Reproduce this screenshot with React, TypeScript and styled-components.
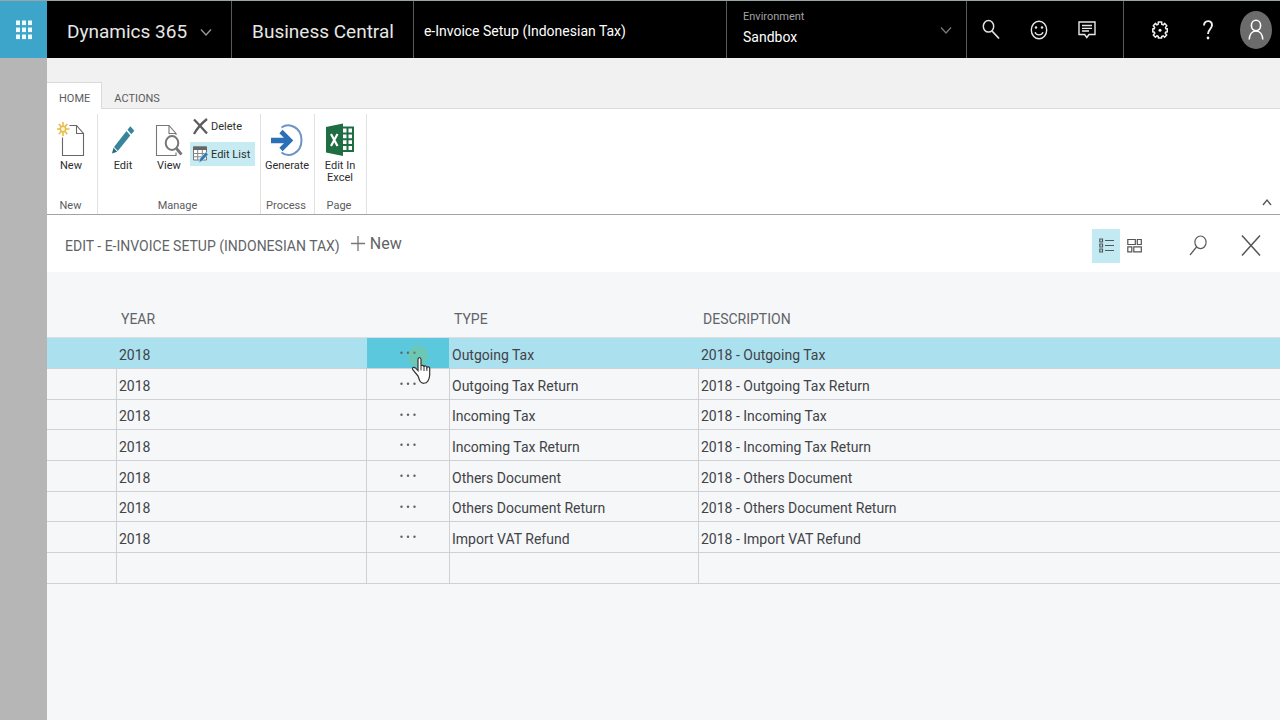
import React from "react";
import styled, { createGlobalStyle } from "styled-components";

const GlobalStyle = createGlobalStyle`
  *, *::before, *::after { box-sizing: border-box; }
  body { margin: 0; background: #f6f7f9; }
  body, button, select, input, table {
    font-family: Roboto, "Segoe UI", sans-serif;
  }
  button { margin: 0; padding: 0; border: 0; background: none; color: inherit; cursor: pointer; }
  svg { display: block; flex: none; }
`;

const Shell = styled.div`
  display: flex;
  flex-direction: column;
  min-height: 100vh;
`;

const TopBar = styled.header`
  display: flex;
  height: 58px;
  background: #000;
  color: #fff;
  border-top: 1px solid #9aa5a8;
`;

const Launcher = styled.button`
  display: grid;
  place-items: center;
  width: 47px;
  background: #3da4ca;
`;

const BrandLink = styled.a`
  display: flex;
  align-items: center;
  gap: 13px;
  padding: 4px 19px 0 20px;
  border-right: 1px solid #5a5a5a;
  font-size: 19px;
  line-height: 28px;
  color: #e6e6e6;
  text-decoration: none;
  white-space: nowrap;
`;

const PageName = styled.div`
  flex: 1;
  display: flex;
  align-items: center;
  padding: 2px 0 0 10px;
  border-right: 1px solid #5a5a5a;
  font-size: 14px;
  white-space: nowrap;
`;

const Environment = styled.label`
  display: flex;
  align-items: center;
  width: 240px;
  padding: 0 14px 0 16px;
  border-right: 1px solid #5a5a5a;
  font-size: 11px;
  line-height: 16px;
  color: #a2a2a2;
`;

const EnvironmentField = styled.span`
  flex: 1;
  display: flex;
  flex-direction: column;
  padding-bottom: 1px;
`;

const EnvironmentSelect = styled.select`
  appearance: none;
  height: 24px;
  padding: 0;
  border: 0;
  background: transparent;
  color: #fff;
  font-size: 14px;
`;

const IconGroup = styled.div<{ $divided?: boolean; $start: number }>`
  display: flex;
  align-items: center;
  padding-left: ${(p) => p.$start}px;
  padding-right: ${(p) => (p.$divided ? 12 : 0)}px;
  border-right: ${(p) => (p.$divided ? "1px solid #5a5a5a" : "0")};
`;

const BarButton = styled.button`
  display: grid;
  place-items: center;
  width: 48px;
  height: 57px;
`;

const Body = styled.div`
  flex: 1;
  display: flex;
`;

const Rail = styled.div`
  width: 47px;
  background: #b6b6b6;
`;

const Main = styled.main`
  flex: 1;
  min-width: 0;
`;

const Tabs = styled.nav`
  display: flex;
  align-items: flex-end;
  height: 51px;
  background: #f1f1f1;
  border-bottom: 1px solid #dadada;
`;

const Tab = styled.button<{ $active?: boolean }>`
  min-width: 53px;
  height: 27px;
  margin-bottom: -1px;
  padding: 4px 11px 0 12px;
  font-size: 11px;
  color: #5c5c5c;
  border: solid ${(p) => (p.$active ? "#dadada" : "transparent")};
  border-width: 1px 1px 0 0;
  background: ${(p) => (p.$active ? "#fff" : "transparent")};
`;

const Ribbon = styled.section`
  display: flex;
  height: 106px;
  padding-top: 5px;
  background: #fff;
  border-bottom: 1px solid #a3a3a3;
`;

const Group = styled.div<{ $width: number }>`
  display: flex;
  flex-direction: column;
  justify-content: space-between;
  width: ${(p) => p.$width}px;
  border-right: 1px solid #e2e2e2;
`;

const GroupItems = styled.div`
  display: flex;
`;

const GroupLabel = styled.div`
  padding-right: 3px;
  text-align: center;
  font-size: 11px;
  line-height: 16px;
  color: #5c5c5c;
`;

const BigAction = styled.button<{ $width: number }>`
  display: flex;
  flex-direction: column;
  align-items: center;
  gap: 2px;
  width: ${(p) => p.$width}px;
  padding-top: 6px;
  font-size: 11px;
  line-height: 12px;
  color: #2e2e2e;
`;

const SmallActions = styled.div`
  display: flex;
  flex-direction: column;
  gap: 4px;
`;

const SmallAction = styled.button<{ $active?: boolean }>`
  display: flex;
  align-items: center;
  gap: 3px;
  width: 65px;
  height: 24px;
  padding-left: 3px;
  font-size: 11px;
  color: #2e2e2e;
  white-space: nowrap;
  background: ${(p) => (p.$active ? "#c6ebf3" : "transparent")};
`;

const Collapse = styled.button`
  align-self: flex-end;
  margin: 0 7px 7px auto;
`;

const TitleBar = styled.div`
  display: flex;
  align-items: center;
  height: 57px;
  padding: 4px 19px 0 18px;
  background: #fff;
  color: #5f6468;
`;

const Title = styled.h1`
  margin: 0;
  font-size: 14px;
  font-weight: 400;
  line-height: 20px;
  white-space: nowrap;
`;

const NewButton = styled.button`
  display: flex;
  align-items: center;
  gap: 5px;
  margin: 0 auto 4px 11px;
  font-size: 16px;
  line-height: 20px;
`;

const ViewButton = styled.button<{ $active?: boolean }>`
  display: grid;
  place-items: center;
  width: 28px;
  height: 34px;
  background: ${(p) => (p.$active ? "#c3eaf2" : "transparent")};
`;

const ToolButton = styled.button<{ $gap: number }>`
  margin-left: ${(p) => p.$gap}px;
`;

const Grid = styled.table`
  width: 100%;
  table-layout: fixed;
  border-collapse: separate;
  border-spacing: 0;
  font-size: 14px;
  color: #414347;
`;

const Col = styled.col<{ $width?: number }>`
  width: ${(p) => (p.$width ? `${p.$width}px` : "auto")};
`;

const HeadCell = styled.th`
  height: 66px;
  padding: 29px 5px 0;
  border-bottom: 1px solid #dcdde0;
  font-size: 14px;
  font-weight: 400;
  text-align: left;
  color: #5f6468;
`;

const Row = styled.tr<{ $selected?: boolean }>`
  height: 31px;
  &:nth-child(3n) { height: 30px; }
  background: ${(p) => (p.$selected ? "#abe1ef" : "transparent")};
`;

const Cell = styled.td<{ $selected?: boolean; $first?: boolean }>`
  padding: 3px 2px 0;
  line-height: 20px;
  border-bottom: 1px solid #cfd1d4;
  border-left: ${(p) => (p.$first ? "0" : `1px solid ${p.$selected ? "#abe1ef" : "#cfd1d4"}`)};
`;

const MoreCell = styled(Cell)`
  position: relative;
  padding: 0;
  background: ${(p) => (p.$selected ? "#5cc8de" : "transparent")};
`;

const MoreButton = styled.button`
  display: grid;
  place-items: center;
  width: 100%;
  height: 29px;
`;

const Pointer = styled.span`
  position: absolute;
  left: 37px;
  top: 5px;
  z-index: 1;
  pointer-events: none;
`;

const Chevron = ({ up, color = "#9a9a9a" }: { up?: boolean; color?: string }) => (
  <svg width="12" height="10" viewBox="0 0 12 10" fill="none" stroke={color} strokeWidth="1.3">
    <path d={up ? "M2 8l4-5 4 5" : "M1 2.5l5 5.5 5-5.5"} />
  </svg>
);

const WaffleIcon = () => (
  <svg width="16" height="20" viewBox="0 0 16 20" fill="#f0fbff">
    {[0, 7, 14].map((y) => [0, 6, 12].map((x) => <rect key={`${x}-${y}`} x={x} y={y + 0.5} width="4" height="4.6" />))}
  </svg>
);

const SearchIcon = () => (
  <svg width="18" height="21" viewBox="0 0 18 21" fill="none" stroke="#e0e0e0">
    <ellipse cx="6.5" cy="7.3" rx="5.2" ry="5.8" strokeWidth="1.5" />
    <path d="M10 12l7 7.5" strokeWidth="1.8" />
  </svg>
);

const SmileIcon = () => (
  <svg width="18" height="20" viewBox="0 0 18 20" fill="none" stroke="#e8e8e8" strokeWidth="1.4">
    <ellipse cx="9" cy="10" rx="7.7" ry="8.8" />
    <path d="M5 12.2c1.4 3.5 6.6 3.5 8 0" />
    <circle cx="6" cy="7.5" r="1.2" fill="#e8e8e8" stroke="none" />
    <circle cx="12" cy="7.5" r="1.2" fill="#e8e8e8" stroke="none" />
  </svg>
);

const ChatIcon = () => (
  <svg width="18" height="19" viewBox="0 0 18 19" fill="none" stroke="#e8e8e8" strokeWidth="1.4">
    <path d="M1 2h16v12.5h-6l-2.2 3-2.2-3H1z" />
    <path d="M4 5.5h10M4 8.3h10M4 11h7" strokeWidth="1.3" />
  </svg>
);

const GearIcon = () => (
  <svg width="16" height="18" viewBox="0 0 16 18" fill="none" stroke="#f0f0f0" strokeWidth="1.5" strokeLinejoin="round">
    <path d="M6.3 1h3.400v2.200l1.500.7 1.600-1.500 2 2.300-1.300 1.700.4 1.300H15.300v3.200h-1.600l-.5 1.300 1.500 1.700-2.100 2.300-1.500-1.400-1.400.7V17H6.300v-1.500l-1.500-.7-1.400 1.400-2.100-2.300 1.500-1.700-.5-1.300H.8V7.700h1.500l.4-1.300-1.400-1.700 2-2.300 1.600 1.500 1.400-.7z" />
    <circle cx="8" cy="9.2" r="1.5" fill="#f0f0f0" stroke="none" />
  </svg>
);

const HelpIcon = () => (
  <svg width="10" height="20" viewBox="0 0 10 20" fill="none" stroke="#f0f0f0" strokeWidth="1.9">
    <path d="M1 5.5C1.200-.3 9-.3 9 5c0 4-4 4.300-4 9" />
    <circle cx="5" cy="18" r="1.4" fill="#f0f0f0" stroke="none" />
  </svg>
);

const AvatarIcon = () => (
  <svg width="32" height="38" viewBox="0 0 32 38" fill="none" stroke="#fff" strokeWidth="1.6">
    <ellipse cx="16" cy="19" rx="16" ry="19" fill="#6b6b6b" stroke="none" />
    <ellipse cx="16" cy="14.5" rx="4.6" ry="5.2" />
    <path d="M9.2 28.5c.2-5 2.800-8.500 6.800-8.500s6.600 3.500 6.800 8.500" />
  </svg>
);

const NewDocIcon = () => (
  <svg width="28" height="38" viewBox="0 0 28 38" fill="none">
    <path d="M12.500 5.500h7l7 8v22h-21v-18" stroke="#666" strokeWidth="1.1" />
    <path d="M19.500 5.500v8h7" stroke="#666" strokeWidth="1.1" />
    <g stroke="#e9bd4c" strokeWidth="1.6">
      <path d="M6 2v4M6 12v4M0 9h3M9 9h3.500M1.800 4l2.400 2.600M10.300 4L7.900 6.600M1.800 14.200l2.400-2.700M10.300 14.200l-2.400-2.700" />
      <circle cx="6" cy="9" r="2.7" fill="#fff8e0" />
    </g>
  </svg>
);

const PencilIcon = () => (
  <svg width="24" height="38" viewBox="0 0 24 38">
    <path d="M3 27L15.500 11l3.800 4.500L6.800 31z" fill="#38859b" />
    <path d="M16.500 9.700l2.800-3.500 4 4.600-3 3.500z" fill="#38859b" />
    <path d="M1 33.500l1.500-5.700 3.600 3.900z" fill="#2b6679" />
  </svg>
);

const ViewIcon = () => (
  <svg width="28" height="38" viewBox="0 0 28 38" fill="none" stroke="#777">
    <path d="M21 15v-1.500l-7-8H1.500v30H21v-3" strokeWidth="1.1" />
    <path d="M14 5.500v8h7" strokeWidth="1.1" />
    <ellipse cx="17" cy="23" rx="6.300" ry="7" fill="#fff" strokeWidth="2" />
    <path d="M21.500 28.500l5 6" strokeWidth="2.800" />
  </svg>
);

const DeleteIcon = () => (
  <svg width="15" height="17" viewBox="0 0 15 17" fill="none" stroke="#5c5c5c" strokeWidth="2.300">
    <path d="M1 1.500c4 4 9 9.500 13 14M14 1C9 5 4 10.500 1 16" />
  </svg>
);

const EditListIcon = () => (
  <svg width="15" height="17" viewBox="0 0 15 17" fill="none">
    <path d="M.5 1h13v13H.5z" fill="#fff" stroke="#777" />
    <path d="M0 .5h14v3.500H0z" fill="#666" />
    <path d="M0 7.500h14M0 10.800h14M4.700 4v10M9.300 4v10" stroke="#888" />
    <path d="M6 16.500l1-4 6-6.500 2 2.500-6 6.500z" fill="#2f78b4" stroke="#c6ebf3" strokeWidth=".5" />
  </svg>
);

const GenerateIcon = () => (
  <svg width="32" height="38" viewBox="0 0 32 38" fill="none">
    <path d="M10.500 7.500C18 2.500 30.500 7 30.500 20S18 38.500 10.500 32.500" stroke="#6d93c4" strokeWidth="2" />
    <path d="M0 20.500h18" stroke="#2b6fb7" strokeWidth="5.500" />
    <path d="M10 11.500l9 9-9 9" stroke="#2b6fb7" strokeWidth="4.600" />
  </svg>
);

const ExcelIcon = () => (
  <svg width="28" height="38" viewBox="0 0 28 38">
    <path d="M15 7.500h12v23.500H15z" fill="#fff" stroke="#1f6e43" strokeWidth="2" />
    <path d="M15 13.400h12M15 19.200h12M15 25h12M21.500 7v24" stroke="#1f6e43" strokeWidth="2" />
    <path d="M0 7l17-3.500v32.500L0 32.500z" fill="#1f6e43" />
    <path d="M5 14l6.500 12M11.500 14L5 26" stroke="#fff" strokeWidth="2.200" />
  </svg>
);

const PlusIcon = () => (
  <svg width="14" height="16" viewBox="0 0 14 16" stroke="#777" strokeWidth="1.300">
    <path d="M7 0v15M0 7.500h14" />
  </svg>
);

const ListIcon = () => (
  <svg width="15" height="15" viewBox="0 0 15 15" fill="none" stroke="#4e5a5e">
    <path d="M.8 1h2.700v3H.8zM.8 6h2.700v3H.8zM.8 11h2.700v3H.8zM6 2.500h9M6 7.500h9M6 12.500h9" strokeWidth="1.200" />
  </svg>
);

const TilesIcon = () => (
  <svg width="15" height="15" viewBox="0 0 15 15" fill="none" stroke="#555" strokeWidth="1.200">
    <path d="M.8 1.500h7.500v5H.8zM10.300 1.500h4v5h-4zM.8 8.800h4v5h-4zM6.800 8.800h7.500v5H6.800z" />
  </svg>
);

const FindIcon = () => (
  <svg width="18" height="21" viewBox="0 0 18 21" fill="none" stroke="#5a5a5a" strokeWidth="1.200">
    <ellipse cx="11.500" cy="7.300" rx="5.600" ry="6.300" />
    <path d="M7.500 12L1 20" />
  </svg>
);

const CloseIcon = () => (
  <svg width="20" height="23" viewBox="0 0 20 23" fill="none" stroke="#555" strokeWidth="1.500">
    <path d="M1 1.500l18 20M19 1.500L1 21.500" />
  </svg>
);

const DotsIcon = () => (
  <svg width="16" height="4" viewBox="0 0 16 4" fill="#5d6468">
    <circle cx="1.500" cy="1.800" r="1.200" />
    <circle cx="8" cy="1.800" r="1.200" />
    <circle cx="14.500" cy="1.800" r="1.200" />
  </svg>
);

const HandIcon = () => (
  <svg width="32" height="44" viewBox="0 0 32 44">
    <ellipse cx="14" cy="13" rx="10" ry="11" fill="#8fc65a" opacity=".3" />
    <path
      d="M14 33l-5-6c-1.500-2.200.8-3.600 2.600-1.800l2.400 2.300V16.500c0-2.600 3-2.600 3 0v7c.3-1.500 2.800-1.500 3 .4.500-1.400 2.700-1.200 2.900.6.700-1.300 2.800-.8 2.800 1V32c0 3-1 4.500-2 6.300-1.500 2.600-6 2.600-7.500.2-1-1.500-1.400-3.500-2.200-5.500z"
      fill="#fff"
      stroke="#333"
      strokeWidth="1.200"
    />
    <path d="M17 23.500v4M20 24v4M22.900 24.500v3.500" stroke="#333" />
  </svg>
);

const rows = [
  "Outgoing Tax",
  "Outgoing Tax Return",
  "Incoming Tax",
  "Incoming Tax Return",
  "Others Document",
  "Others Document Return",
  "Import VAT Refund",
].map((type) => ({ year: "2018", type, description: `2018 - ${type}` }));

export default function App() {
  return (
    <Shell>
      <GlobalStyle />
      <TopBar>
        <Launcher aria-label="App launcher"><WaffleIcon /></Launcher>
        <BrandLink href="#">Dynamics 365 <Chevron /></BrandLink>
        <BrandLink href="#">Business Central</BrandLink>
        <PageName>e-Invoice Setup (Indonesian Tax)</PageName>
        <Environment>
          <EnvironmentField>
            Environment
            <EnvironmentSelect defaultValue="Sandbox"><option>Sandbox</option></EnvironmentSelect>
          </EnvironmentField>
          <Chevron color="#777" />
        </Environment>
        <IconGroup $divided $start={0}>
          <BarButton aria-label="Search"><SearchIcon /></BarButton>
          <BarButton aria-label="Feedback"><SmileIcon /></BarButton>
          <BarButton aria-label="Messages"><ChatIcon /></BarButton>
        </IconGroup>
        <IconGroup $start={12}>
          <BarButton aria-label="Settings"><GearIcon /></BarButton>
          <BarButton aria-label="Help"><HelpIcon /></BarButton>
          <BarButton aria-label="Account"><AvatarIcon /></BarButton>
        </IconGroup>
      </TopBar>
      <Body>
        <Rail />
        <Main>
          <Tabs>
            <Tab $active>HOME</Tab>
            <Tab>ACTIONS</Tab>
          </Tabs>
          <Ribbon>
            <Group $width={51}>
              <GroupItems>
                <BigAction $width={48}><NewDocIcon />New</BigAction>
              </GroupItems>
              <GroupLabel>New</GroupLabel>
            </Group>
            <Group $width={163}>
              <GroupItems>
                <BigAction $width={50}><PencilIcon />Edit</BigAction>
                <BigAction $width={42}><ViewIcon />View</BigAction>
                <SmallActions>
                  <SmallAction><DeleteIcon />Delete</SmallAction>
                  <SmallAction $active><EditListIcon />Edit List</SmallAction>
                </SmallActions>
              </GroupItems>
              <GroupLabel>Manage</GroupLabel>
            </Group>
            <Group $width={54}>
              <GroupItems>
                <BigAction $width={52}><GenerateIcon />Generate</BigAction>
              </GroupItems>
              <GroupLabel>Process</GroupLabel>
            </Group>
            <Group $width={52}>
              <GroupItems>
                <BigAction $width={50}><ExcelIcon /><span>Edit In<br />Excel</span></BigAction>
              </GroupItems>
              <GroupLabel>Page</GroupLabel>
            </Group>
            <Collapse aria-label="Collapse ribbon"><Chevron up color="#555" /></Collapse>
          </Ribbon>
          <TitleBar>
            <Title>EDIT - E-INVOICE SETUP (INDONESIAN TAX)</Title>
            <NewButton><PlusIcon />New</NewButton>
            <ViewButton $active aria-label="List view"><ListIcon /></ViewButton>
            <ViewButton aria-label="Tile view"><TilesIcon /></ViewButton>
            <ToolButton $gap={41} aria-label="Find"><FindIcon /></ToolButton>
            <ToolButton $gap={34} aria-label="Close"><CloseIcon /></ToolButton>
          </TitleBar>
          <Grid>
            <colgroup>
              <Col $width={69} />
              <Col $width={250} />
              <Col $width={83} />
              <Col $width={249} />
              <Col />
            </colgroup>
            <thead>
              <tr>
                <HeadCell />
                <HeadCell>YEAR</HeadCell>
                <HeadCell />
                <HeadCell>TYPE</HeadCell>
                <HeadCell>DESCRIPTION</HeadCell>
              </tr>
            </thead>
            <tbody>
              {rows.map((row, i) => {
                const selected = i === 0;
                return (
                  <Row key={row.type} $selected={selected}>
                    <Cell $first />
                    <Cell $selected={selected}>{row.year}</Cell>
                    <MoreCell $selected={selected}>
                      <MoreButton aria-label={`More options for ${row.type}`}><DotsIcon /></MoreButton>
                      {selected && <Pointer><HandIcon /></Pointer>}
                    </MoreCell>
                    <Cell $selected={selected}>{row.type}</Cell>
                    <Cell $selected={selected}>{row.description}</Cell>
                  </Row>
                );
              })}
              <Row>
                <Cell $first /><Cell /><Cell /><Cell /><Cell />
              </Row>
            </tbody>
          </Grid>
        </Main>
      </Body>
    </Shell>
  );
}
